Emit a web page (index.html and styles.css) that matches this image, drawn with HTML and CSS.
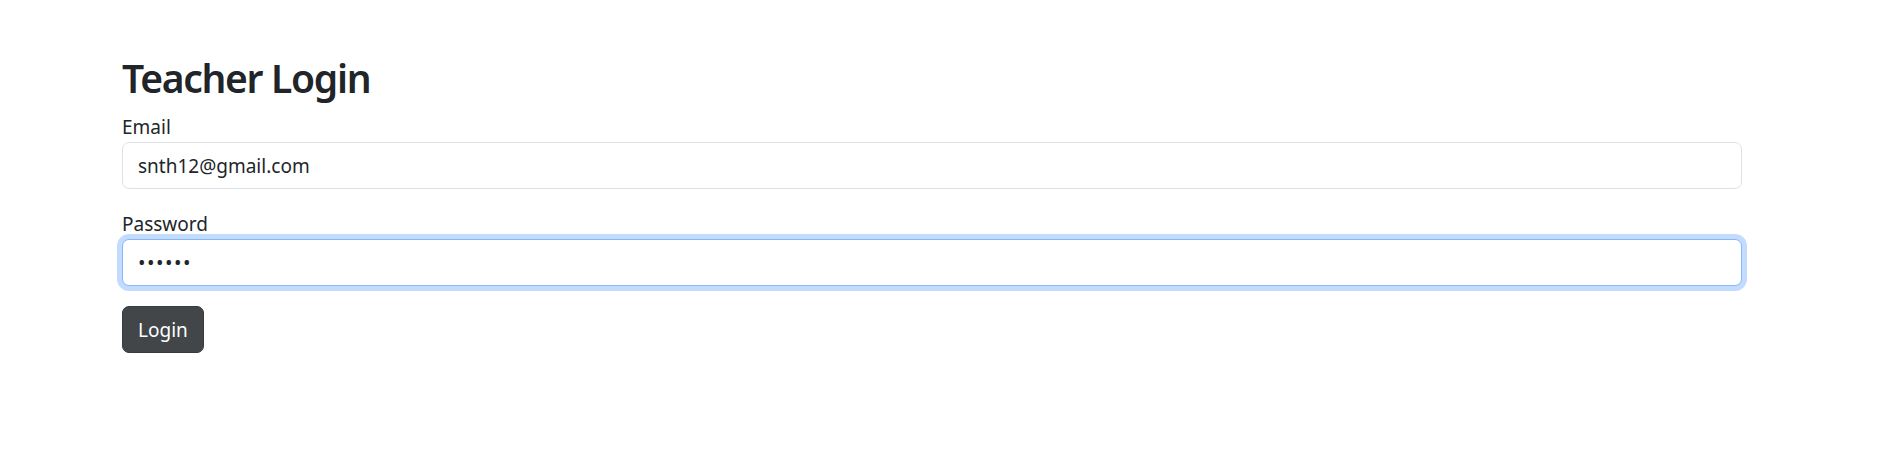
FILE: index.html
```html
<!DOCTYPE html>
<html lang="en">
<head>
<meta charset="utf-8">
<title>Teacher Login</title>
<link rel="stylesheet" href="styles.css">
</head>
<body>
<main class="container">
  <h2 class="title">Teacher Login</h2>
  <form class="login-form">
    <div class="field">
      <label class="label" for="email">Email</label>
      <input class="control" id="email" type="email" value="snth12@gmail.com">
    </div>
    <div class="field">
      <label class="label" for="password">Password</label>
      <input class="control control-focus control-secret" id="password" type="password" value="123456">
    </div>
    <button class="btn" type="button">Login</button>
  </form>
</main>
</body>
</html>
```
FILE: styles.css
```css
* { box-sizing: border-box; }
html, body {
  margin: 0;
  padding: 0;
  background: #fff;
}
body {
  font-family: "Noto Sans", "Open Sans", sans-serif;
  color: #212529;
  font-size: 20px;
  line-height: 1.5;
}
.container {
  padding: 54px 0 0 122px;
  width: 1742px;
}
.title {
  margin: 0 0 10px 0;
  font-size: 39px;
  font-weight: 600;
  line-height: 48px;
  letter-spacing: -1.3px;
}
.login-form {
  display: flex;
  flex-direction: column;
  gap: 20px;
}
.field {
  display: flex;
  flex-direction: column;
}
.label {
  font-size: 19px;
  line-height: 30px;
  height: 30px;
}
.control {
  display: block;
  width: 100%;
  height: 47px;
  padding: 6px 15px;
  font-family: inherit;
  font-size: 19px;
  color: #212529;
  background: #fff;
  border: 1px solid #dee2e6;
  border-radius: 7px;
  outline: none;
}
.control-focus {
  border-color: #86b7fe;
  box-shadow: 0 0 0 5px rgba(13, 110, 253, 0.25);
}
.control-secret {
  letter-spacing: 1.5px;
  font-size: 20px;
}
.btn {
  align-self: flex-start;
  height: 47px;
  padding: 0 15px;
  font-family: inherit;
  font-size: 19px;
  color: #fff;
  background: #424649;
  border: 1px solid #373b3e;
  border-radius: 7px;
}
```
